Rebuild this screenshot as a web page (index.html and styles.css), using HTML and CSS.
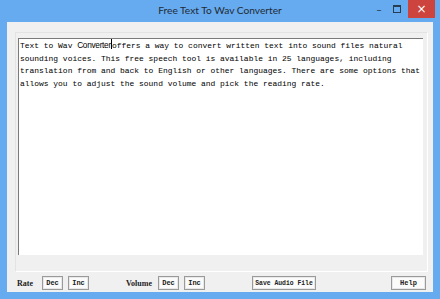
FILE: index.html
```html
<!DOCTYPE html>
<html>
<head>
  <meta charset="UTF-8">
  <title>Free Text To Wav Converter</title>
  <link rel="stylesheet" href="styles.css">
</head>
<body>
  <div class="window">
    <div class="titlebar">
      <div></div>
      <div class="title">Free Text To Wav Converter</div>
      <div class="controls">
        <span class="ctl min">&ndash;</span>
        <span class="ctl max"><span class="box"></span></span>
        <span class="ctl close">&times;</span>
      </div>
    </div>

    <div class="client">
      <div class="group">
        <div class="editor">
          <div class="line">Text to Wav <span class="sans">Converter</span><span class="caret"></span>offers a way to convert written text into sound files natural</div>
          <div class="line">sounding voices. This free speech tool is available in 25 languages, including</div>
          <div class="line">translation from and back to English or other languages. There are some options that</div>
          <div class="line">allows you to adjust the sound volume and pick the reading rate.</div>
        </div>
      </div>

      <div class="toolbar">
        <span class="lbl rate-lbl">Rate</span>
        <button class="btn">Dec</button>
        <button class="btn">Inc</button>
        <span class="lbl vol-lbl">Volume</span>
        <button class="btn">Dec</button>
        <button class="btn">Inc</button>
        <button class="btn save">Save Audio File</button>
        <button class="btn help">Help</button>
      </div>
    </div>
  </div>
</body>
</html>
```

FILE: styles.css
```css
html, body {
  margin: 0;
  padding: 0;
}
body {
  width: 440px;
  height: 299px;
  overflow: hidden;
  font-family: "Liberation Mono", monospace;
}
.window {
  height: 299px;
  background: #66aaef;
  display: flex;
  flex-direction: column;
}
.titlebar {
  height: 22px;
  display: grid;
  grid-template-columns: 1fr auto 1fr;
  align-items: start;
}
.title {
  font-family: Lato, "Liberation Sans", sans-serif;
  font-size: 10.2px;
  color: #222a33;
  line-height: 20px;
}
.controls {
  display: flex;
  justify-content: flex-end;
  padding-right: 5px;
}
.ctl {
  height: 18px;
  display: flex;
  align-items: center;
  justify-content: center;
  color: #2a3c50;
  font-family: "DejaVu Sans", sans-serif;
  font-size: 10px;
}
.min {
  width: 18px;
}
.max {
  width: 18px;
}
.max .box {
  width: 6px;
  height: 5px;
  border: 1px solid #2a3c50;
  border-top-width: 2px;
}
.close {
  width: 27px;
  background: #cc443d;
  color: #ffffff;
  font-size: 12px;
  margin-left: 2px;
}
.client {
  flex: 1;
  margin: 0 7px 7px;
  background: #f0f0f0;
  display: flex;
  flex-direction: column;
}
.group {
  margin: 10px 5px 0 8px;
  height: 240px;
  border-top: 1px solid #e3e3e3;
  border-left: 1px solid #e3e3e3;
  border-right: 1px solid #ffffff;
  border-bottom: 1px solid #ffffff;
  padding: 5px 4px 16px 2px;
  box-sizing: border-box;
}
.editor {
  height: 100%;
  box-sizing: border-box;
  background: #ffffff;
  border-top: 1px solid #7a7a7a;
  border-left: 1px solid #7a7a7a;
  padding: 0 2px 0 1px;
  font-size: 7.94px;
  line-height: 12.7px;
  color: #000000;
}
.line {
  white-space: nowrap;
}
.sans {
  font-family: "Liberation Sans", sans-serif;
  font-size: 8.3px;
  letter-spacing: -0.3px;
}
.caret {
  display: inline-block;
  width: 1px;
  height: 10px;
  background: #000000;
  vertical-align: -1px;
}
.toolbar {
  display: flex;
  align-items: center;
  padding: 4px 0 0 10px;
  font-family: "Liberation Serif", serif;
}
.lbl {
  font-size: 8px;
  font-weight: bold;
  color: #222222;
}
.btn {
  font-family: "Liberation Mono", monospace;
  font-size: 7px;
  font-weight: bold;
  height: 14px;
  width: 21px;
  padding: 0;
  white-space: nowrap;
  background: #fbfbfb;
  border: 1px solid #9a9a9a;
  box-shadow: inset 0 0 0 1px #e8e8e8;
  color: #222222;
  margin: 0;
}
.rate-lbl {
  width: 25px;
}
.btn + .btn {
  margin-left: 5px;
}
.vol-lbl {
  margin-left: 37px;
  width: 32px;
}
.btn.save {
  margin-left: 47px;
  width: 64px;
  font-size: 6.4px;
}
.btn.help {
  margin-left: auto;
  margin-right: 7px;
  width: 35px;
}
```
